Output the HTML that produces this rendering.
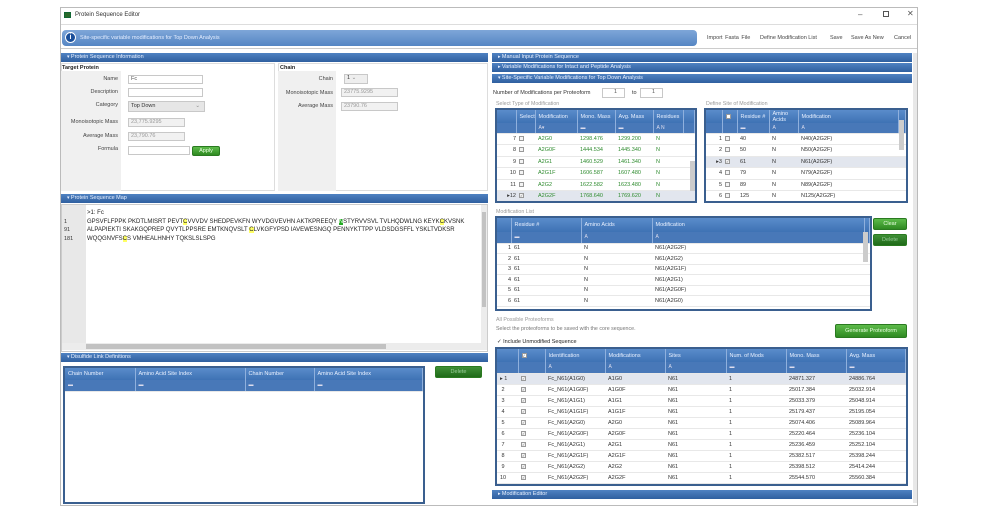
<!DOCTYPE html><html><head><meta charset="utf-8"><style>
*{box-sizing:border-box;margin:0;padding:0}
body{width:984px;height:509px;background:#fff;font-family:"Liberation Sans",sans-serif;font-size:6px;color:#333;position:relative;overflow:hidden}
.a{position:absolute}
.hd{position:absolute;height:9px;background:linear-gradient(#4f82c2,#2f5f9f);color:#e8f0ff;font-size:5.5px;line-height:9px;padding-left:6px}
.hd:before{content:"▾ ";font-size:5px}
.hd.c:before{content:"▸ "}
.in{position:absolute;height:9px;border:1px solid #c8c8c8;background:#fff;font-size:5.5px;line-height:7px;padding-left:2px;color:#555}
.gr{background:#f1f1f1;color:#999}
.lb{position:absolute;font-size:5.5px;text-align:right;color:#444}
.btn{position:absolute;background:linear-gradient(#5dbb4a,#2f8a22);color:#e8ffe0;font-size:5.5px;text-align:center;border-radius:2px;border:1px solid #2a7a20}
.dk{background:linear-gradient(#3f8f36,#1f6a18)}
table{border-collapse:collapse;position:absolute;table-layout:fixed}
.tb{position:absolute;border:2px solid #3a5f8f;background:#fff;overflow:hidden}
.tb table{position:static;width:100%}
th{background:linear-gradient(#5a8ccb,#3e72b4);color:#e8f0ff;font-weight:normal;font-size:5.5px;text-align:left;padding-left:3px;border-right:1px solid #8fb0dd}
tr.f td{background:#4878b8;color:#dde;font-size:5px;border-right:1px solid #8fb0dd}
td{font-size:5.5px;padding-left:3px;border-bottom:1px solid #e8e8e8;white-space:nowrap;overflow:hidden}
.g td{color:#2e8b2e}
.sel td{background:#e2e6ee}
.cb{display:inline-block;width:5px;height:5px;border:1px solid #999;background:#f4f4f4;vertical-align:middle;font-size:4px;line-height:4px;color:#666}
.sb{position:absolute;background:#ececec}
.th{position:absolute;background:#c2c2c2}
</style></head><body>
<div class="a" style="left:60px;top:7px;width:858px;height:499px;border:1px solid #bbb;background:#fff"></div>
<div class="a" style="left:64px;top:12px;width:7px;height:6px;background:#2a6a2a;border:1px solid #163"></div>
<div class="a" style="left:75px;top:12px;font-size:6px;color:#333">Protein Sequence Editor</div>
<div class="a" style="left:858px;top:10px;font-size:8px;color:#555">–</div>
<div class="a" style="left:883px;top:11px;width:6px;height:6px;border:1px solid #555"></div>
<div class="a" style="left:907px;top:9px;font-size:8px;color:#555">✕</div>
<div class="a" style="left:61px;top:24px;width:856px;height:1px;background:#ddd"></div>
<div class="a" style="left:62px;top:30px;width:635px;height:16px;border-radius:4px;background:linear-gradient(#7ea6d8,#5586c4);"></div>
<div class="a" style="left:65px;top:32px;width:11px;height:11px;border-radius:50%;background:#1a4f9a;border:1px solid #fff;color:#fff;font-size:7px;font-weight:bold;text-align:center;line-height:10px">i</div>
<div class="a" style="left:80px;top:35px;color:#e6eeff;font-size:5.5px">Site-specific variable modifications for Top Down Analysis</div>
<div class="a" style="left:707px;top:35px;font-size:5.5px;color:#444;word-spacing:1px">Import Fasta File</div>
<div class="a" style="left:760px;top:35px;font-size:5.5px;color:#444">Define Modification List</div>
<div class="a" style="left:830px;top:35px;font-size:5.5px;color:#444">Save</div>
<div class="a" style="left:851px;top:35px;font-size:5.5px;color:#444">Save As New</div>
<div class="a" style="left:894px;top:35px;font-size:5.5px;color:#444">Cancel</div>
<div class="a" style="left:61px;top:48px;width:856px;height:1px;background:#ccc"></div>

<div class="hd" style="left:61px;top:53px;width:427px">Protein Sequence Information</div>
<div class="a" style="left:61px;top:63px;width:214px;height:128px;border:1px solid #ddd"></div>
<div class="a" style="left:61px;top:71px;width:60px;height:120px;background:#f0f0f0"></div>
<div class="a" style="left:62px;top:65px;font-weight:bold;font-size:5.5px;color:#222">Target Protein</div>
<div class="lb" style="left:62px;top:76px;width:56px">Name</div>
<div class="lb" style="left:62px;top:89px;width:56px">Description</div>
<div class="lb" style="left:62px;top:102px;width:56px">Category</div>
<div class="lb" style="left:62px;top:119px;width:56px">Monoisotopic Mass</div>
<div class="lb" style="left:62px;top:133px;width:56px">Average Mass</div>
<div class="lb" style="left:62px;top:146px;width:56px">Formula</div>
<div class="in" style="left:128px;top:75px;width:75px">Fc</div>
<div class="in" style="left:128px;top:88px;width:75px"></div>
<div class="in" style="left:128px;top:101px;width:77px;height:11px;background:#e6e6e6;line-height:9px;color:#333">Top Down<span style="float:right;margin-right:4px;color:#888">⌄</span></div>
<div class="in gr" style="left:128px;top:118px;width:57px">23,775.9295</div>
<div class="in gr" style="left:128px;top:132px;width:57px">23,790.76</div>
<div class="in" style="left:128px;top:146px;width:62px"></div>
<div class="btn" style="left:192px;top:146px;width:28px;height:10px;line-height:8px">Apply</div>

<div class="a" style="left:278px;top:63px;width:210px;height:128px;border:1px solid #ddd"></div>
<div class="a" style="left:278px;top:71px;width:58px;height:120px;background:#f0f0f0"></div>
<div class="a" style="left:280px;top:65px;font-weight:bold;font-size:5.5px;color:#222">Chain</div>
<div class="lb" style="left:278px;top:76px;width:55px">Chain</div>
<div class="lb" style="left:278px;top:90px;width:55px">Monoisotopic Mass</div>
<div class="lb" style="left:278px;top:103px;width:55px">Average Mass</div>
<div class="in" style="left:344px;top:74px;width:24px;height:10px;background:#eee;color:#333">1 <span style="color:#888">⌄</span></div>
<div class="in gr" style="left:341px;top:88px;width:57px">23775.9295</div>
<div class="in gr" style="left:341px;top:102px;width:57px">23790.76</div>

<div class="hd" style="left:61px;top:194px;width:427px">Protein Sequence Map</div>
<div class="a" style="left:61px;top:204px;width:427px;height:148px;border:1px solid #ccc;background:#fff"></div>
<div class="a" style="left:62px;top:205px;width:24px;height:138px;background:#e8e8e8"></div>
<div class="sb" style="left:481px;top:205px;width:6px;height:145px"></div>
<div class="th" style="left:482px;top:212px;width:4px;height:95px"></div>
<div class="sb" style="left:62px;top:343px;width:419px;height:7px"></div>
<div class="th" style="left:86px;top:344px;width:300px;height:5px"></div>
<div class="a" style="left:64px;top:209px;line-height:8.5px;font-size:5.5px">&nbsp;<br>1<br>91<br>181</div>
<div class="a" style="left:87px;top:209px;line-height:8.5px;font-size:6px;white-space:pre;color:#222">&gt;1: Fc
GPSVFLFPPK PKDTLMISRT PEVT<span style="background:#ff6">C</span>VVVDV SHEDPEVKFN WYVDGVEVHN AKTKPREEQY <span style="background:#2a2;color:#fff">N</span>STYRVVSVL TVLHQDWLNG KEYK<span style="background:#ff6">C</span>KVSNK
ALPAPIEKTI SKAKGQPREP QVYTLPPSRE EMTKNQVSLT <span style="background:#ff6">C</span>LVKGFYPSD IAVEWESNGQ PENNYKTTPP VLDSDGSFFL YSKLTVDKSR
WQQGNVFS<span style="background:#ff6">C</span>S VMHEALHNHY TQKSLSLSPG</div>

<div class="hd" style="left:61px;top:353px;width:427px">Disulfide Link Definitions</div>
<div class="tb" style="left:63px;top:366px;width:362px;height:138px">
<table><colgroup><col style="width:70px"><col style="width:110px"><col style="width:69px"><col></colgroup>
<tr style="height:12px"><th>Chain Number</th><th>Amino Acid Site Index</th><th>Chain Number</th><th>Amino Acid Site Index</th></tr>
<tr class="f" style="height:11px"><td>▬</td><td>▬</td><td>▬</td><td>▬</td></tr></table></div>
<div class="btn dk" style="left:435px;top:366px;width:47px;height:12px;line-height:10px;color:#9c9">Delete</div>

<div class="hd c" style="left:492px;top:53px;width:420px">Manual Input Protein Sequence</div>
<div class="hd c" style="left:492px;top:63px;width:420px">Variable Modifications for Intact and Peptide Analysis</div>
<div class="hd" style="left:492px;top:74px;width:420px">Site-Specific Variable Modifications for Top Down Analysis</div>
<div class="a" style="left:913px;top:53px;width:4px;height:450px;background:#e8e8e8"></div>
<div class="a" style="left:493px;top:90px;font-size:5.5px">Number of Modifications per Proteoform</div>
<div class="in" style="left:602px;top:88px;width:23px;height:10px;text-align:right;padding-right:7px">1</div>
<div class="a" style="left:632px;top:90px;font-size:5.5px">to</div>
<div class="in" style="left:640px;top:88px;width:23px;height:10px;text-align:right;padding-right:7px">1</div>
<div class="a" style="left:496px;top:101px;font-size:5.3px;color:#999">Select Type of Modification</div>
<div class="a" style="left:706px;top:101px;font-size:5.3px;color:#999">Define Site of Modification</div>
<div class="tb" style="left:495px;top:108px;width:202px;height:95px">
<table><colgroup><col style="width:19px"><col style="width:19px"><col style="width:42px"><col style="width:38px"><col style="width:38px"><col style="width:30px"><col></colgroup>
<tr style="height:13px"><th></th><th>Select</th><th>Modification</th><th>Mono. Mass</th><th>Avg. Mass</th><th>Residues</th><th></th></tr>
<tr class="f" style="height:10px"><td></td><td></td><td>A▾</td><td>▬</td><td>▬</td><td>A N</td><td></td></tr>
<tr class="g" style="height:11.5px"><td style="color:#333;text-align:right">7</td><td><span class="cb"></span></td><td>A2G0</td><td>1298.476</td><td>1299.200</td><td>N</td><td></td></tr>
<tr class="g" style="height:11.5px"><td style="color:#333;text-align:right">8</td><td><span class="cb"></span></td><td>A2G0F</td><td>1444.534</td><td>1445.340</td><td>N</td><td></td></tr>
<tr class="g" style="height:11.5px"><td style="color:#333;text-align:right">9</td><td><span class="cb"></span></td><td>A2G1</td><td>1460.529</td><td>1461.340</td><td>N</td><td></td></tr>
<tr class="g" style="height:11.5px"><td style="color:#333;text-align:right">10</td><td><span class="cb"></span></td><td>A2G1F</td><td>1606.587</td><td>1607.480</td><td>N</td><td></td></tr>
<tr class="g" style="height:11.5px"><td style="color:#333;text-align:right">11</td><td><span class="cb"></span></td><td>A2G2</td><td>1622.582</td><td>1623.480</td><td>N</td><td></td></tr>
<tr class="g sel" style="height:11.5px"><td style="color:#333;text-align:right">▸12</td><td><span class="cb">✓</span></td><td>A2G2F</td><td>1768.640</td><td>1769.620</td><td>N</td><td></td></tr>
</table></div>
<div class="th" style="left:690px;top:161px;width:5px;height:30px;background:#ccc"></div>
<div class="tb" style="left:704px;top:108px;width:204px;height:95px">
<table><colgroup><col style="width:16px"><col style="width:15px"><col style="width:32px"><col style="width:29px"><col style="width:100px"><col></colgroup>
<tr style="height:13px"><th></th><th><span class="cb" style="background:#fff"></span></th><th>Residue #</th><th>Amino Acids</th><th>Modification</th><th></th></tr>
<tr class="f" style="height:10px"><td></td><td></td><td>▬</td><td>A</td><td>A</td><td></td></tr>
<tr style="height:11.5px"><td style="text-align:right">1</td><td><span class="cb"></span></td><td>40</td><td>N</td><td>N40(A2G2F)</td><td></td></tr>
<tr style="height:11.5px"><td style="text-align:right">2</td><td><span class="cb"></span></td><td>50</td><td>N</td><td>N50(A2G2F)</td><td></td></tr>
<tr class="sel" style="height:11.5px"><td style="text-align:right">▸3</td><td><span class="cb">✓</span></td><td>61</td><td>N</td><td>N61(A2G2F)</td><td></td></tr>
<tr style="height:11.5px"><td style="text-align:right">4</td><td><span class="cb"></span></td><td>79</td><td>N</td><td>N79(A2G2F)</td><td></td></tr>
<tr style="height:11.5px"><td style="text-align:right">5</td><td><span class="cb"></span></td><td>89</td><td>N</td><td>N89(A2G2F)</td><td></td></tr>
<tr style="height:11.5px"><td style="text-align:right">6</td><td><span class="cb"></span></td><td>125</td><td>N</td><td>N125(A2G2F)</td><td></td></tr>
</table></div>
<div class="th" style="left:899px;top:120px;width:5px;height:30px;background:#ccc"></div>

<div class="a" style="left:496px;top:209px;font-size:5.3px;color:#999">Modification List</div>
<div class="tb" style="left:495px;top:216px;width:377px;height:95px">
<table><colgroup><col style="width:14px"><col style="width:70px"><col style="width:71px"><col style="width:212px"><col></colgroup>
<tr style="height:14px"><th></th><th>Residue #</th><th>Amino Acids</th><th>Modification</th><th></th></tr>
<tr class="f" style="height:11px"><td></td><td>▬</td><td>A</td><td>A</td><td></td></tr>
<tr style="height:10.5px"><td style="text-align:right">1</td><td>61</td><td>N</td><td>N61(A2G2F)</td><td></td></tr>
<tr style="height:10.5px"><td style="text-align:right">2</td><td>61</td><td>N</td><td>N61(A2G2)</td><td></td></tr>
<tr style="height:10.5px"><td style="text-align:right">3</td><td>61</td><td>N</td><td>N61(A2G1F)</td><td></td></tr>
<tr style="height:10.5px"><td style="text-align:right">4</td><td>61</td><td>N</td><td>N61(A2G1)</td><td></td></tr>
<tr style="height:10.5px"><td style="text-align:right">5</td><td>61</td><td>N</td><td>N61(A2G0F)</td><td></td></tr>
<tr style="height:10.5px"><td style="text-align:right">6</td><td>61</td><td>N</td><td>N61(A2G0)</td><td></td></tr>
</table></div>
<div class="th" style="left:863px;top:232px;width:5px;height:30px;background:#ccc"></div>
<div class="btn" style="left:873px;top:218px;width:34px;height:12px;line-height:10px">Clear</div>
<div class="btn dk" style="left:873px;top:234px;width:34px;height:12px;line-height:10px;color:#9c9">Delete</div>

<div class="a" style="left:496px;top:317px;font-size:5.3px;color:#999">All Possible Proteoforms</div>
<div class="a" style="left:496px;top:326px;font-size:5.3px;color:#777">Select the proteoforms to be saved with the core sequence.</div>
<div class="btn" style="left:835px;top:324px;width:72px;height:14px;line-height:12px">Generate Proteoform</div>
<div class="a" style="left:497px;top:339px;font-size:5.5px;color:#222">✓ Include Unmodified Sequence</div>
<div class="tb" style="left:495px;top:347px;width:413px;height:139px">
<table><colgroup><col style="width:21px"><col style="width:27px"><col style="width:60px"><col style="width:60px"><col style="width:61px"><col style="width:60px"><col style="width:60px"><col></colgroup>
<tr style="height:13px"><th></th><th><span class="cb" style="background:#fff">✓</span></th><th>Identification</th><th>Modifications</th><th>Sites</th><th>Num. of Mods</th><th>Mono. Mass</th><th>Avg. Mass</th></tr>
<tr class="f" style="height:11px"><td></td><td></td><td>A</td><td>A</td><td>A</td><td>▬</td><td>▬</td><td>▬</td></tr>
<tr class="sel" style="height:11px"><td>▸ 1</td><td><span class="cb">✓</span></td><td>Fc_N61(A1G0)</td><td>A1G0</td><td>N61</td><td>1</td><td>24871.327</td><td>24886.764</td></tr>
<tr style="height:11px"><td>&nbsp;2</td><td><span class="cb">✓</span></td><td>Fc_N61(A1G0F)</td><td>A1G0F</td><td>N61</td><td>1</td><td>25017.384</td><td>25032.914</td></tr>
<tr style="height:11px"><td>&nbsp;3</td><td><span class="cb">✓</span></td><td>Fc_N61(A1G1)</td><td>A1G1</td><td>N61</td><td>1</td><td>25033.379</td><td>25048.914</td></tr>
<tr style="height:11px"><td>&nbsp;4</td><td><span class="cb">✓</span></td><td>Fc_N61(A1G1F)</td><td>A1G1F</td><td>N61</td><td>1</td><td>25179.437</td><td>25195.054</td></tr>
<tr style="height:11px"><td>&nbsp;5</td><td><span class="cb">✓</span></td><td>Fc_N61(A2G0)</td><td>A2G0</td><td>N61</td><td>1</td><td>25074.406</td><td>25089.964</td></tr>
<tr style="height:11px"><td>&nbsp;6</td><td><span class="cb">✓</span></td><td>Fc_N61(A2G0F)</td><td>A2G0F</td><td>N61</td><td>1</td><td>25220.464</td><td>25236.104</td></tr>
<tr style="height:11px"><td>&nbsp;7</td><td><span class="cb">✓</span></td><td>Fc_N61(A2G1)</td><td>A2G1</td><td>N61</td><td>1</td><td>25236.459</td><td>25252.104</td></tr>
<tr style="height:11px"><td>&nbsp;8</td><td><span class="cb">✓</span></td><td>Fc_N61(A2G1F)</td><td>A2G1F</td><td>N61</td><td>1</td><td>25382.517</td><td>25398.244</td></tr>
<tr style="height:11px"><td>&nbsp;9</td><td><span class="cb">✓</span></td><td>Fc_N61(A2G2)</td><td>A2G2</td><td>N61</td><td>1</td><td>25398.512</td><td>25414.244</td></tr>
<tr style="height:11px"><td>10</td><td><span class="cb">✓</span></td><td>Fc_N61(A2G2F)</td><td>A2G2F</td><td>N61</td><td>1</td><td>25544.570</td><td>25560.384</td></tr>
</table></div>
<div class="hd c" style="left:492px;top:490px;width:420px">Modification Editor</div>
</body></html>
